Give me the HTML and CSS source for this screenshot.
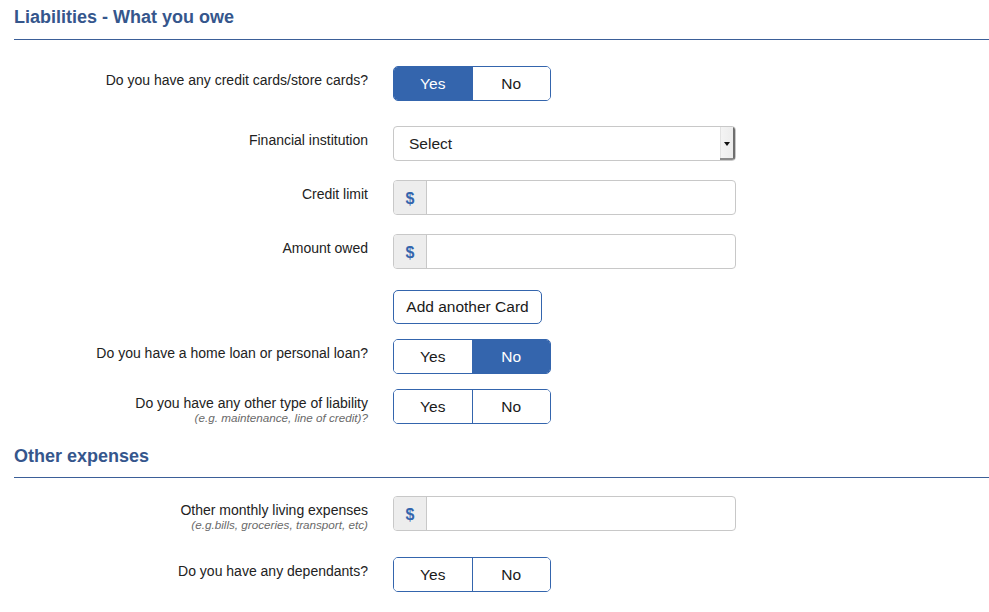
FILE: index.html
```html
<!DOCTYPE html>
<html>
<head>
<meta charset="utf-8">
<link rel="stylesheet" href="styles.css">
</head>
<body>
<div class="page">
  <h2 class="section-title first">Liabilities - What you owe</h2>

  <div class="row r1">
    <div class="label"><span class="main">Do you have any credit cards/store cards?</span></div>
    <div class="toggle"><span class="opt active">Yes</span><span class="opt">No</span></div>
  </div>

  <div class="row r2">
    <div class="label"><span class="main">Financial institution</span></div>
    <div class="select"><span class="select-text">Select</span><span class="select-arrow"><span class="tri"></span></span></div>
  </div>

  <div class="row r3">
    <div class="label"><span class="main">Credit limit</span></div>
    <div class="input-group"><span class="addon">$</span><span class="field"></span></div>
  </div>

  <div class="row r4">
    <div class="label"><span class="main">Amount owed</span></div>
    <div class="input-group"><span class="addon">$</span><span class="field"></span></div>
  </div>

  <div class="row r5">
    <div class="label"></div>
    <button class="btn">Add another Card</button>
  </div>

  <div class="row r6">
    <div class="label"><span class="main">Do you have a home loan or personal loan?</span></div>
    <div class="toggle"><span class="opt">Yes</span><span class="opt active">No</span></div>
  </div>

  <div class="row r7">
    <div class="label"><span class="main">Do you have any other type of liability</span><span class="sub">(e.g. maintenance, line of credit)?</span></div>
    <div class="toggle"><span class="opt">Yes</span><span class="opt">No</span></div>
  </div>

  <h2 class="section-title second">Other expenses</h2>

  <div class="row r8">
    <div class="label"><span class="main">Other monthly living expenses</span><span class="sub">(e.g.bills, groceries, transport, etc)</span></div>
    <div class="input-group"><span class="addon">$</span><span class="field"></span></div>
  </div>

  <div class="row r9">
    <div class="label"><span class="main">Do you have any dependants?</span></div>
    <div class="toggle"><span class="opt">Yes</span><span class="opt">No</span></div>
  </div>
</div>
</body>
</html>
```

FILE: styles.css
```css
* { box-sizing: border-box; }
html, body { margin: 0; padding: 0; background: #fff; }
body {
  font-family: "Liberation Sans", Arial, Helvetica, sans-serif;
  color: #222;
  width: 989px;
  height: 612px;
  overflow: hidden;
}
.page { padding-left: 14px; }

.section-title {
  margin: 0;
  font-size: 18px;
  line-height: 20px;
  font-weight: bold;
  color: #35568c;
  border-bottom: 1px solid #3b5f98;
}
.section-title.first { margin-top: 7px; padding-bottom: 12px; }
.section-title.second { margin-top: 22px; padding-bottom: 11px; }

.row {
  display: flex;
  align-items: flex-start;
  gap: 25px;
}
.r1 { margin-top: 26px; }
.r2 { margin-top: 25px; }
.r3 { margin-top: 19px; }
.r4 { margin-top: 19px; }
.r5 { margin-top: 21px; }
.r6 { margin-top: 15px; }
.r7 { margin-top: 15px; }
.r8 { margin-top: 18px; }
.r9 { margin-top: 26px; }

.label {
  width: 354px;
  height: 30px;
  flex: none;
  text-align: right;
  padding-top: 5px;
  display: flex;
  flex-direction: column;
  align-items: flex-end;
}
.label .main { font-size: 14px; line-height: 18px; color: #222; white-space: nowrap; }
.label .sub {
  font-size: 11.7px;
  line-height: 12px;
  font-style: italic;
  color: #6a6a6a;
  white-space: nowrap;
}

.toggle {
  display: flex;
  width: 158px;
  height: 35px;
  border: 1px solid #3465ad;
  border-radius: 5px;
  overflow: hidden;
}
.toggle .opt {
  flex: 1;
  display: flex;
  align-items: center;
  justify-content: center;
  font-size: 15.5px;
  color: #1a1a1a;
  background: #fff;
}
.toggle .opt + .opt { border-left: 1px solid #3465ad; }
.toggle .opt.active { background: #3465ad; color: #fff; }

.select {
  display: flex;
  width: 343px;
  height: 35px;
  border: 1px solid #c8c8c8;
  border-radius: 4px;
  overflow: hidden;
  background: #fff;
}
.select-text {
  flex: 1;
  display: flex;
  align-items: center;
  padding-left: 15px;
  font-size: 15.5px;
  color: #222;
}
.select-arrow {
  width: 15px;
  display: flex;
  align-items: center;
  justify-content: center;
  background: linear-gradient(to right, #f4f4f4, #ececec);
  border-right: 2px solid #6e6e6e;
  border-bottom: 2px solid #8a8a8a;
  box-shadow: inset 1px 0 0 #e2e2e2;
}
.tri {
  width: 0;
  height: 0;
  border-left: 3px solid transparent;
  border-right: 3px solid transparent;
  border-top: 4px solid #111;
  margin-top: 2px;
}

.input-group {
  display: flex;
  width: 343px;
  height: 35px;
  border: 1px solid #c8c8c8;
  border-radius: 4px;
  overflow: hidden;
  background: #fff;
}
.addon {
  width: 33px;
  flex: none;
  background: #ededed;
  border-right: 1px solid #c8c8c8;
  display: flex;
  align-items: center;
  justify-content: center;
  font-size: 16px;
  font-weight: bold;
  color: #3465ad;
  padding-top: 2px;
}
.field { flex: 1; }

.btn {
  width: 149px;
  height: 34px;
  border: 1px solid #3465ad;
  border-radius: 5px;
  background: #fff;
  font-family: "Liberation Sans", Arial, Helvetica, sans-serif;
  font-size: 15.5px;
  color: #1a1a1a;
  padding: 0;
  margin: 0;
}
```
